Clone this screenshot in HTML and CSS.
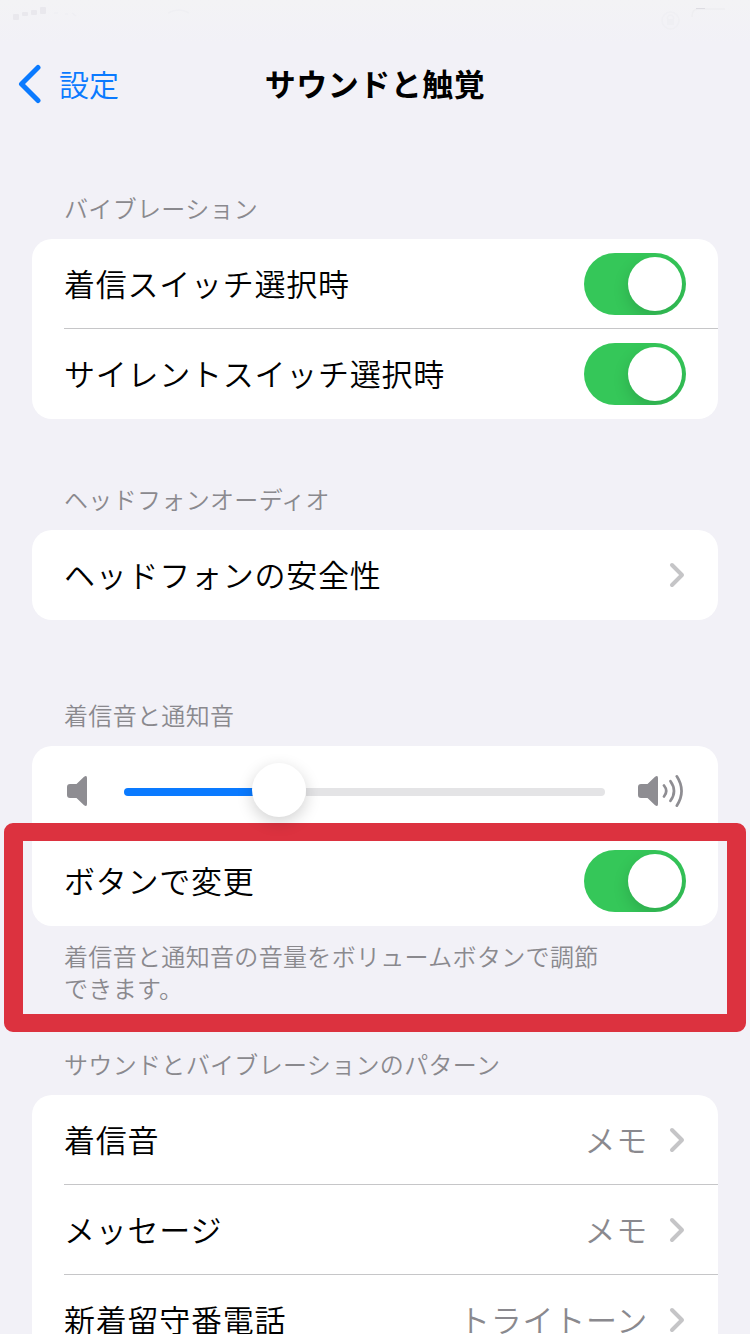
FILE: index.html
```html
<!DOCTYPE html>
<html lang="ja">
<head>
<meta charset="utf-8">
<title>サウンドと触覚</title>
<link rel="stylesheet" href="styles.css">
</head>
<body>
<svg class="defs" width="0" height="0">
  <symbol id="chevron" viewBox="0 0 16 26"><path d="M3 3 13 13 3 23" fill="none" stroke="#c5c5c7" stroke-width="4" stroke-linecap="round" stroke-linejoin="round"/></symbol>
  <symbol id="speaker" viewBox="0 0 21 30"><path d="M3 8h6.500l7.300-7q3.200-2.200 3.200 1v26q0 3.200-3.200 1l-7.300-7H3q-3 0-3-3V11q0-3 3-3z" fill="#8e8d92"/></symbol>
</svg>
<div class="screen">
  <div class="status">
    <svg width="750" height="44" viewBox="0 0 750 44">
      <g fill="#e9e8ed"><rect x="13" y="14" width="6" height="6" rx="1"/><rect x="22" y="12" width="6" height="4" rx="1"/><rect x="31" y="10" width="6" height="5" rx="1"/><rect x="40" y="7" width="6" height="7" rx="1"/></g>
      <g fill="none" stroke="#efeff3" stroke-width="1.500"><path d="M168 13q11-6 21 0M54 13h4M65 14h3M72 13l4 3"/><circle cx="670.500" cy="20.500" r="8.500"/><path d="M667.500 19v-2q3-4 6 0v2"/></g>
      <rect x="667" y="19" width="7" height="6" fill="#efeff3"/>
      <path d="M692 17q0-8 6-8h27" fill="none" stroke="#eeeef1" stroke-width="1.500"/>
      <path d="M696 8.500h9" stroke="#dddce2" stroke-width="1"/>
    </svg>
  </div>
  <header class="nav">
    <a class="back">
      <svg width="24" height="40" viewBox="0 0 24 40"><path d="M20 3.500 3.500 20 20 36.500" fill="none" stroke="#0a7aff" stroke-width="5" stroke-linecap="round" stroke-linejoin="round"/></svg>
      <span class="back-text">設定</span>
    </a>
    <h1 class="title">サウンドと触覚</h1>
  </header>

  <section class="group">
    <h2 class="heading">バイブレーション</h2>
    <div class="card">
      <div class="row"><span class="label">着信スイッチ選択時</span><span class="switch"><span class="thumb"></span></span></div>
      <div class="row"><span class="label">サイレントスイッチ選択時</span><span class="switch"><span class="thumb"></span></span></div>
    </div>
  </section>

  <section class="group group-headphone">
    <h2 class="heading">ヘッドフォンオーディオ</h2>
    <div class="card">
      <div class="row"><span class="label">ヘッドフォンの安全性</span><svg class="chevron"><use href="#chevron"/></svg></div>
    </div>
  </section>

  <section class="group group-volume">
    <h2 class="heading">着信音と通知音</h2>
    <div class="card">
      <div class="row row-slider">
        <svg class="speaker"><use href="#speaker"/></svg>
        <div class="track"><div class="fill"></div><div class="thumb knob"></div><div class="rest"></div></div>
        <svg class="speaker"><use href="#speaker"/></svg>
        <svg class="waves" width="22" height="34" viewBox="0 0 22 34"><path d="M2 11.500q4.500 5.500 0 11M8.500 7.200q7 9.800 0 19.600M14.800 2.300q9.500 14.700 0 29.400" fill="none" stroke="#8e8d92" stroke-width="2.700" stroke-linecap="round"/></svg>
      </div>
      <div class="row"><span class="label">ボタンで変更</span><span class="switch"><span class="thumb"></span></span></div>
    </div>
    <p class="note">着信音と通知音の音量をボリュームボタンで調節<br>できます。</p>
    <div class="highlight"></div>
  </section>

  <section class="group group-patterns">
    <h2 class="heading">サウンドとバイブレーションのパターン</h2>
    <div class="card">
      <div class="row"><span class="label">着信音</span><span class="value">メモ</span><svg class="chevron"><use href="#chevron"/></svg></div>
      <div class="row"><span class="label">メッセージ</span><span class="value">メモ</span><svg class="chevron"><use href="#chevron"/></svg></div>
      <div class="row"><span class="label">新着留守番電話</span><span class="value">トライトーン</span><svg class="chevron"><use href="#chevron"/></svg></div>
    </div>
  </section>
</div>
</body>
</html>
```
FILE: styles.css
```css
* { box-sizing: border-box; }

body {
  margin: 0;
  background: #f2f1f7;
  font-family: "Noto Sans CJK JP", sans-serif;
  font-weight: 350;
  color: #000;
}

.defs { position: absolute; }

.screen {
  width: 750px;
  height: 1334px;
  overflow: hidden;
}

.status {
  height: 44px;
  background: linear-gradient(#f3f3f5, #f2f1f7);
}

.status svg { display: block; }

.nav {
  display: grid;
  grid-template-columns: 1fr auto 1fr;
  align-items: center;
  height: 80px;
  padding: 0 18px;
  margin-bottom: 68px;
}

.back {
  display: flex;
  align-items: center;
  gap: 17px;
  color: #0a7aff;
  font-size: 30px;
  line-height: 40px;
}

.back-text { padding-bottom: 3px; }

.title {
  margin: 0;
  padding-bottom: 3px;
  font-size: 31px;
  font-weight: 700;
  letter-spacing: 0.5px;
  line-height: 40px;
}

.group {
  position: relative;
  padding: 0 32px;
}

.group-headphone { margin-top: 64px; }
.group-volume { margin-top: 79px; }
.group-patterns { margin-top: 44px; }

.heading,
.note {
  margin: 0;
  padding: 0 32px;
  font-size: 24px;
  font-weight: 350;
  letter-spacing: 0.33px;
  line-height: 32px;
  color: #8a898e;
}

.heading { padding-bottom: 15px; }
.note { padding-top: 14px; }

.card {
  border-radius: 20px;
  background: #fff;
}

.row {
  display: flex;
  align-items: center;
  height: 90px;
  margin-left: 32px;
  padding-right: 33px;
}

.row:not(:last-child) { box-shadow: inset 0 -1px #c6c6c8; }

.label,
.value {
  padding-bottom: 2px;
  font-size: 31px;
  letter-spacing: 0.75px;
  line-height: 40px;
}

.label { flex: 1; }
.value { color: #8a898e; }

.chevron {
  width: 16px;
  height: 26px;
  margin-left: 21px;
}

.switch {
  display: flex;
  justify-content: flex-end;
  width: 102px;
  height: 62px;
  margin-right: -1px;
  padding: 4px;
  border-radius: 31px;
  background: #35c759;
  overflow: hidden;
}

.thumb {
  width: 54px;
  height: 54px;
  border-radius: 50%;
  background: #fff;
  box-shadow: 0 6px 16px rgba(0, 0, 0, 0.15);
}

.row-slider { padding-left: 3px; }

.speaker {
  width: 21px;
  height: 30px;
}

.track {
  display: flex;
  align-items: center;
  width: 481px;
  height: 56px;
  margin: 2px 33px 0 36px;
}

.fill,
.rest { height: 8px; }

.fill {
  width: 132px;
  margin-right: -4px;
  border-radius: 4px 0 0 4px;
  background: #0a7aff;
}

.rest {
  flex: 1;
  border-radius: 0 4px 4px 0;
  background: #e4e4e6;
}

.knob {
  flex: none;
  z-index: 1;
  margin-top: -4px;
  box-shadow: 0 5px 16px rgba(0, 0, 0, 0.18);
}

.waves { margin-left: 3px; }

/* Callout frame around the "change with buttons" setting */
.highlight {
  position: absolute;
  top: 124px;
  left: 4px;
  width: 742px;
  height: 209px;
  border: 18px solid #dc323f;
  border-right-width: 19px;
  border-left-width: 19px;
  border-radius: 9px;
}
```
